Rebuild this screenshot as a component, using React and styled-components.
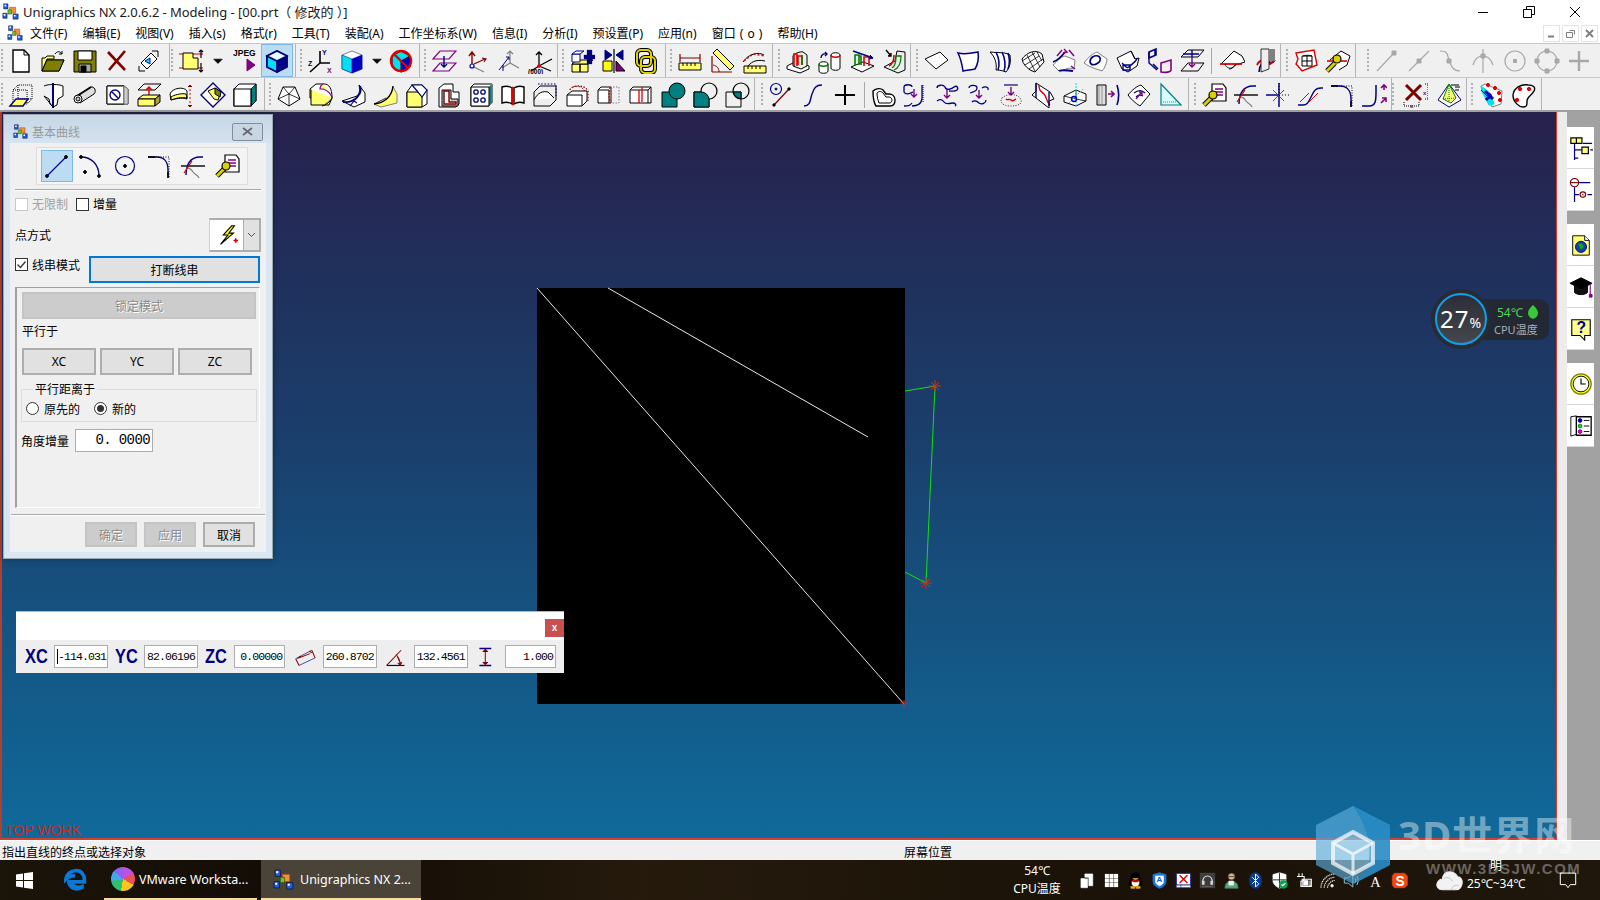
import React from "react";
import styled, { createGlobalStyle } from "styled-components";

const FONT = `"Noto Sans", "Noto Sans CJK SC", sans-serif`;

const GlobalStyle = createGlobalStyle`
  html, body { margin: 0; padding: 0; overflow: hidden; background: #fff; }
  * { box-sizing: border-box; }
  body { font-family: ${FONT}; font-size: 12px; color: #000; }
`;

const N = "#000080", K = "#000", M = "#800000", R = "#e00000", Y = "#ffff70", T = "#008080";
const P = "#800080", G = "#808080", W = "#fff", C = "#00e0f0", B = "#0000c0", L = "#a8a8a8";
const c = (x, y, r) => `M${x - r} ${y}a${r} ${r} 0 1 0 ${2 * r} 0a${r} ${r} 0 1 0 ${-2 * r} 0z`;
const dot = (x, y) => c(x, y, 1.4);

// every icon: list of [path, stroke, fill, strokeWidth] or {t: text}
const icons = {
  file: [["M5 2h11l5 5v17H5z", K, W, 1.4], ["M16 2v5h5", K, "none"]],
  open: [["M2 23V10h3l2-2h7v3H7L2 23h17l5-11H7", K, Y], ["M2 23l5-11h17l-5 11z", K, "#808000"], ["M15 6c2-3 5-3 7 0M22 3v3h-3", K, "none"]],
  save: [["M2 3h22v21H2z", K, "#808000"], ["M6 3h14v9H6z", K, W], ["M7 16h12v8H7z", K, L], ["M9 18h5v6H9z", K, K]],
  del: [["M4 4l17 18M21 3L5 22", M, "none", 2.6]],
  wcsview: [["M5 15l10-10 6 6-10 10z", K, W], ["M9 13l5-3v6z", B, C], ["M16 3h6v6M3 18v5h6", K, "none", 1]],
  crop: [["M1 6h24M1 20h24", R, "none"], ["M5 5h10v5h5v11H5z", K, Y], ["M23 2v8M23 15v9M21 4l2-2 2 2M21 22l2 2 2-2", K, "none", 1.2]],
  arrow: [["M6 10h14l-7 7z", K, K]],
  jpeg: [{ t: "JPEG", x: 1, y: 8, s: 8.5, c: K, w: 700 }, ["M15 11l8 6-8 6z", P, P]],
  cube: [["M3 8l10-5 10 5v11l-10 5-10-5z", N, W, 1.6], ["M3 8l10 5v11l-10-5z", N, C, 1.6], ["M13 13l10-5v11l-10 5z", N, N, 1.2], ["M3 8l10-5 10 5-10 5z", N, "#e8ffff", 1.6]],
  axes: [["M13 15V3M13 15l-10 9M13 15h10", K, "none", 1.6], { t: "Y", x: 15, y: 7, s: 7, c: N, w: 700 }, { t: "Z", x: 1, y: 18, s: 7, c: N, w: 700 }, { t: "X", x: 20, y: 25, s: 7, c: P, w: 700 }],
  cubeC: [["M3 7l10-4 10 4v14l-10 4-10-4z", N, W, 0.5], ["M3 7l10 4v14l-10-4z", N, C, 0.5], ["M13 11l10-4v14l-10 4z", B, B, 0.5]],
  noCube: [["M4 8l9-5 9 5v11l-9 5-9-5z", K, C], ["M13 13l9-5v11l-9 5z", K, B], [c(13, 13, 10), R, "none", 2.4], ["M6 6l14 14", R, "none", 2.4]],
  planes: [["M9 3h16l-7 8H2z", P, "none", 1.2], ["M9 15h16l-7 8H2z", P, "none", 1.2], ["M13 8v11M10 16l3 3 3-3", N, "none", 1.4]],
  ptvec: [["M9 17V4M6 8l3-4 3 4", M, "none", 1.4], ["M11 16l11-5M19 10l4 1-2 3", M, "none", 1.2], ["M11 19l10 5", G, "none", 1.2], [c(9, 18, 2), B, W, 1.2]],
  axes3g: [["M15 15V3M12 6l3-3 3 3M15 15l9 5M15 15l-8 5", G, "none", 1.2], ["M8 17v6M8 17l-4 5M8 17l6-8M11 9h3v3", N, "none", 1]],
  axes000: [["M12 18V4M9 7l3-3 3 3M12 18l13-7M12 18l12 5M12 18l-8 5", K, "none", 1.3], [c(12, 18, 1.4), R, R, 1], { t: "(000)", x: 1, y: 26, s: 6.5, c: K, w: 700 }],
  addBody: [["M3 16h8v8H3zM11 16h8v8h-8z", K, Y], ["M3 16l5-4h16l-5 4z", K, Y], ["M3 6h8v8H3z", N, W], ["M3 6l4-3h8l-4 3z", N, W], ["M18 2h5v5h3v4h-3v5h-5v-5h-3V7h3z", N, N, 0.3]],
  mirror: [["M13 1v24", K, "none", 1.2], ["M2 13h9v10H2z", K, "#ffff00"], ["M15 13l9 10h-9z", K, P], ["M4 2l7 5-7 5zM22 2l-7 5 7 5z", N, N]],
  chain: [["M8 2h6a4 4 0 0 1 4 4v8a4 4 0 0 1-4 4H8a4 4 0 0 1-4-4V6a4 4 0 0 1 4-4zM12 9h6a4 4 0 0 1 4 4v8a4 4 0 0 1-4 4h-6a4 4 0 0 1-4-4v-8a4 4 0 0 1 4-4z", K, "none", 4], ["M8 2h6a4 4 0 0 1 4 4v8a4 4 0 0 1-4 4H8a4 4 0 0 1-4-4V6a4 4 0 0 1 4-4zM12 9h6a4 4 0 0 1 4 4v8a4 4 0 0 1-4 4h-6a4 4 0 0 1-4-4v-8a4 4 0 0 1 4-4z", "#e0d000", "none", 2]],
  ruler: [["M3 6v8M23 6v8M3 10h20", M, "none", 1.2], ["M2 15h22v7H2z", K, Y], ["M6 15v3M10 15v3M14 15v3M18 15v3", K, "none", 1]],
  angle: [["M3 24V8M3 24h20", M, "none", 1.2], ["M4 5l4-4 17 17-4 4z", K, Y], ["M10 24c0-4-2-6-6-7", M, "none", 1]],
  surfMeas: [["M2 14c6-9 16-10 21-7M6 20c3-6 9-9 18-7", K, "none", 1], ["M3 13l9-7 12 2", R, "none", 1.4, "2 2"], ["M3 18h22v7H3z", K, Y], ["M7 18v3M11 18v3M15 18v3M19 18v3", K, "none", 1]],
  bossA: [["M2 18l8-4 14 4v3l-9 4-13-4z", K, W], ["M8 18V8c0-2 8-5 10-4l4 3v11l-6 3z", K, "#eee"], ["M9 18V6h3v12M13 17V8h4v9", R, "none", 1.6], ["M17 7v10", "#008000", "none", 1.6]],
  cylinders: [["M14 7c0-3 9-3 9 0v13c0 3-9 3-9 0z", K, W], ["M14 7c0 3 9 3 9 0", R, "none", 1.6], ["M2 16c0-3 9-3 9 0v7c0 3-9 3-9 0z", K, W], ["M2 16c0 3 9 3 9 0", "#008000", "none", 1.6], ["M4 10c0-4 4-5 6-4M8 4l2 2-2 2", N, "none", 1.4]],
  bossB: [["M2 19l12-5 11 4-12 6z", K, W], ["M6 18V7h4v10M10 8h2v9", "#008000", "none", 1.6], ["M15 18v-9h5v9", R, "none", 1.6], ["M4 3l20 7", N, "none", 1.4], ["M21 7l3 3-4 1", N, N]],
  bossC: [["M3 19l14 6 7-3V4l-8-1-2 10z", K, "#eee"], ["M11 20c4-2 4-8 4-12h5c0 6-2 12-7 14", "#008000", "none", 1.3], ["M8 18c4-2 5-7 5-11", R, "none", 1.6], ["M5 2l5 6M7 8h3V5", K, K, 1.4]],
  surfPts: [["M2 11l15-7 8 8-12 9z", K, W], ["M8 11h.1M12 9h.1M16 9h.1M10 14h.1M14 13h.1M18 12h.1M13 17h.1M16 16h.1", R, "none", 2.2]],
  surfPatch: [["M3 5c7 2 15 0 20-1 1 7 0 12-3 17-4 1-8 1-12 2-1-7-2-12-5-18z", N, W, 1.5]],
  surfRib: [["M3 4c9 1 15 0 20 3 1 7 0 12-4 17-5-2-8-2-10-2 1-7-1-13-6-18z", K, W, 1], ["M9 4c3 6 4 12 2 18M15 4c3 6 4 14 2 19M21 5c2 6 2 11 0 16", N, "none", 1.6]],
  surfMesh: [["M3 11c5-7 14-10 20-5l2 8-9 10-5-2c-4-3-7-6-8-11z", K, W], ["M8 7l8 16M13 4l8 15M18 4l5 9M3 13l13-8M6 17l14-9M10 21l14-10", K, "none", 0.8]],
  surfArrow: [["M2 17c4-3 7-8 12-9l10 4-1 9c-5-2-9 0-14 3z", G, W], ["M2 14c6-2 9-6 12-10", N, "none", 1.8], ["M8 23c0-1 8-1 14 0", N, "none", 1.8], ["M18 2l5 6M6 8l5-6M13 1l3 3-4 1M20 18l4 3", P, "none", 1.4]],
  surfLoop: [["M1 15C5 9 11 5 14 4l10 7c0 3-2 9-5 12-5-2-11-3-18-8z", G, W], ["M7 14c0-5 5-7 8-6s3 5 0 7-7 3-8-1z", N, "none", 1.6]],
  surfBlue: [["M2 10l14-7 4 8 4-1-2 8-9 6-6-3z", K, W], ["M16 3l4 8", K, "none"], ["M7 15c3 2 4 7 8 3s7-5 7-8M8 17h7v5H8z", N, "none", 1.4]],
  extr2: [["M2 10l7-3V1l-7 3zM8 8V2", N, "none", 1.6], ["M2 4v11l8 7", N, "none", 1.4], ["M14 15l10-3v10c0 2-6 3-10 2z", P, "none", 1.6], ["M6 16l5 5", N, N, 1.6]],
  stack: [["M9 2h16l-6 7H2z", K, "none", 1], ["M4 6h16M13 2v7", N, "none", 1.4], ["M9 15h16l-6 8H2z", K, "none", 1], ["M13 9v10M10 16l3 3 3-3", P, "none", 1.4]],
  trim1: [["M2 16l13-13 8 5 3 6-10 3c-2 3-4 4-6 4", K, W], ["M1 16h22", R, "none", 1.8], ["M6 16c1 5 8 6 11 0", K, "none", 0.8]],
  trim2: [["M8 24C8 18 12 12 17 12c2 4 5 3 7 0", N, "none", 1.6], ["M6 17c2-4 5-5 8-4 2 4 6 4 8 0", R, "none", 2], ["M10 1h8v20l-8 3z", K, "#eee", 0.8], ["M18 1h6v12h-6z", K, G, 0]],
  redSurf: [["M3 5l18-3 3 15-15 6-4-5-2-2 2-5z", R, W, 1.4], ["M9 8h10v10H9zM14 8v10M9 13h10", K, "none", 1], ["M10 8c3-1 6-1 9 0", K, "none", 1]],
  wrenchSurf: [["M5 12l11-9 9 5-3 9-8 5", K, W], ["M2 13l20 0", R, "none", 1.6], ["M2 23l8-8", K, "none", 5], ["M2 23l8-8", "#d8d000", "none", 3], [c(12, 11, 4), K, "#d8d000", 1.2]],
  dLine: [["M3 23L20 5", L, "none", 1.2], ["M18 3h4v4h-4z", L, L]],
  dLine2: [["M3 23L23 3", L, "none", 1.2], ["M11 11h4v4h-4z", L, L]],
  dCurve: [["M2 3c8 0 7 3 9 9s4 11 11 11", L, "none", 1.2], ["M9 11h4v4H9z", L, L]],
  dArcPt: [["M3 17c2-7 6-9 10-9s8 3 10 9M13 1v24", L, "none", 1.2], ["M11 6h4v4h-4z", L, L]],
  dCirc: [[c(13, 13, 10), L, "none", 1.2], ["M11.500 11.500h3v3h-3z", L, L]],
  dCirc2: [[c(13, 13, 10), L, "none", 1.2], ["M11 1h4v4h-4zM11 21h4v4h-4zM1 11h4v4H1zM21 11h4v4h-4z", L, L]],
  dPlus: [["M13 3v20M3 13h20", L, "none", 2.4]],
  boxPlane: [["M5 8l5-5h14v14l-5 5H5z", K, "none", 1, "1 1"], ["M5 8h14v14M10 3v14h14", K, "none", 1, "1 1"], ["M2 24l6-7h12l-5 7z", N, Y, 1.4]],
  pin: [["M4 4c4-2 15-2 19 0v10l-5 3-1 6-4 2V4", K, W], ["M13 25l-3-3-1-5-5-3z", K, "#eee"], ["M13 1v25", N, "none", 2]],
  tube: [["M5 14l14-9c3-1 6 4 3 7L8 21", K, "#ddd"], ["M5 14l14-9", K, W, 2], [c(6, 17, 4), K, W], [c(6, 17, 2), K, "#ccc"]],
  boxCircle: [["M3 4h17l4 3v15H3z", K, W], ["M3 4h17v18H3z", K, W], ["M20 4l4 3v15l-4 0z", G, "#ccc"], [c(11, 13, 5), N, "none", 1.4], ["M8 10l6 6", N, "none", 1.4]],
  extrude: [["M8 2h17l-6 6H2z", K, "none", 1], ["M13 14V5M10 8l3-3 3 3", R, "none", 1.4], ["M2 17l5-4h17l-5 4z", K, Y], ["M2 17h17v7H2z", K, Y], ["M19 17l5-4v7l-5 4z", K, "#b0a040"]],
  revolve: [["M2 12c2-6 14-8 17-3v8c-6-2-12 0-16 1z", K, W], ["M3 18c5-2 10-3 16-2l-1-4c-5-1-12 1-15 3z", K, Y], ["M22 3v22", R, "none", 1, "2 2"], ["M20 5l2-2 2 2M20 23l2 2 2-2", M, M, 1]],
  diamond: [["M13 1l12 12-12 12L1 13z", N, W, 1.4], ["M8 9l7-3 6 4-3 8-4-1z", K, Y], ["M15 6l6 4-1 5-5-3z", K, "#808000"]],
  cubeW: [["M2 7l5-5h17v17l-5 5H2z", K, W], ["M19 7l5-5v17l-5 5z", K, T, 0.8], ["M2 7h17v17H2z", K, W, 1.2]],
  frustum: [["M7 5h12l5 12-11 7-11-7z", K, W], ["M7 5l6 7 6-7M2 17l11-5 11 5M13 12v12", K, "none", 0.8]],
  blend: [["M2 7h10c6 0 11 3 12 9H2z", K, Y], ["M2 7l6-5h8c5 0 8 4 8 14", K, "#fff"], ["M16 2c-2 0-4 2-4 5h3c3 1 8 3 9 9", P, Y, 1.2], ["M3 8v15h18l3-7", K, Y], ["M14 24c4-1 8-4 10-8", K, "#b0a040"]],
  chamf1: [["M2 19l15-5c3-3 3-7 2-11l6 8v9L14 25z", K, W], ["M3 20c6 1 13-2 15-6 3-3 3-7 2-10", N, "none", 1.8], ["M10 24l4-5 3 2", N, "none", 1.2]],
  chamf2: [["M2 22c9-1 17-6 19-17l4 7v9L9 25z", G, Y], ["M2 22c10-1 18-7 19-18", K, "none", 1.4], ["M2 22l12-6", K, "none", 0.8]],
  chamfBlock: [["M3 10l5-7h10l5 5v14l-5 3H3z", K, W], ["M3 10h11l4 5v10H3z", K, Y], ["M14 10l4 5 5-7-5-5H8z", N, W, 1.2]],
  pocket: [["M3 6l5-4h9v8h6v12l-3 3H3z", K, W], ["M6 8h9v9h7v7H6z", K, "#ccc"], ["M8 9h5v11h7v2H8z", M, W, 1.4]],
  holes: [["M3 5l3-3h18v19l-3 3H3z", K, W], ["M21 5l3-3v19l-3 3z", G, T], ["M3 5h18v19H3z", K, W], [c(8, 10, 2.2), N, "none", 1.3], [c(15, 10, 2.2), N, "none", 1.3], [c(8, 18, 2.2), N, "none", 1.3], [c(15, 18, 2.2), N, "none", 1.3]],
  book: [["M2 5c3-1 7-1 10 1v16c-3-2-7-2-10-1zM14 6c3-2 7-2 10-1v16c-3-1-7-1-10 1z", K, W, 1.4], ["M12 5h2v18h-2z", R, R, 0.4]],
  shell: [["M2 10l6-6h16v14l-6 6H2z", K, "#eee"], ["M6 2h18v12", N, "none", 1, "1.600 1.600"], ["M2 18c4-8 9-9 14-8l6 6", K, W]],
  offset: [["M3 13l5-4h15v10l-5 5H3z", K, W], ["M3 13h15v11", K, "none"], ["M6 8c0-4 14-7 18 1v10", M, "none", 1.2, "1.500 1.500"], ["M9 5c5-2 10 0 12 5", M, "none", 1, "1.500 1.500"]],
  split: [["M2 8l3-3h10v16H2z", K, W], ["M2 8h11v13", K, "none"], ["M14 5h9v16h-9", G, "none", 1, "1.500 1.500"], ["M14 5l-1 8 1 8", R, "none", 1.4, "2 1"]],
  split2: [["M2 8l3-3h18v16H2z", K, W], ["M2 8h18v13M20 8l3-3", K, "none"], ["M11 8V21M14 5v15", R, "none", 1.3]],
  uniteT: [["M2 10h15v15H2z", K, T], [c(17, 9, 8), K, T]],
  subtT: [["M2 10h15v15H2z", K, T], [c(17, 9, 8), K, "#f0f0f0", 1.2], ["M2 10h7.500a8 8 0 0 1 7.500 7v8H2z", K, T, 1]],
  intersT: [["M2 10h15v15H2z", K, "#f0f0f0"], [c(17, 9, 8), K, "none", 1.2], ["M9.500 10H17v6.500a8 8 0 0 1-7.500-6.500z", K, T, 1]],
  circLine: [[c(8, 7, 5.5), N, "none", 1.2], [c(8, 7, 1), N, N], ["M6 23L21 7", M, "none", 1.2], [c(6, 23, 1.2), K, K], [c(21, 7, 1.2), K, K]],
  spline: [["M4 24c7 0 6-7 8-12s3-9 10-9", N, "none", 1.4]],
  plus: [["M13 3v20M3 13h20", K, "none", 2]],
  profile: [["M3 9c3-3 8-3 10-1l3 4h3c3 0 6 2 6 6s-2 6-5 6H6c-2-3-3-8-3-15z", K, W, 1.4], ["M7 11c2-2 4-2 6 0l3 4h3c2 0 3 2 3 3s-1 3-2 3H9c-1-3-2-6-2-10z", K, "none", 1]],
  curves1: [["M2 5c0-3 8-3 8 0M10 24c5 0 9-2 10-7V3", N, "none", 1.3], ["M2 5v5c2 3 4 2 9 0M2 24c4 0 6 0 8-3", N, "none", 1.3], ["M21 3v18", K, "none", 1, "1 1"], ["M12 7v8M9 12l3 3 3-3", P, "none", 1.4]],
  curves2: [["M3 6c0-3 6-4 8-1 1 4 7 2 9 0 3-2 5 1 3 3s-6 1-8 1M3 19c2-2 5-2 7 1 2 3 7 1 9 1s4 2 2 3", N, "none", 1.3], ["M13 8v8M10 13l3 3 3-3", P, "none", 1.4]],
  curves3: [["M3 6c0-3 8-4 8 0s-5 4-7 5M6 20c2-2 5-1 7 1 3 2 7 0 7-3M16 6c3-2 7-1 6 2", N, "none", 1.3], ["M13 8v8M10 13l3 3 3-3", P, "none", 1.4]],
  offPts: [["M6 3h14", N, "none", 1.2], ["M13 5v8M10 10l3 3 3-3", P, "none", 1.4], ["M4 16c4-4 14-5 18 0 4 6-2 8-10 8-7 0-11-4-8-8z", K, "none", 0.8, "1 1.500"], ["M8 17c2 2 3-1 5 1s3 0 5-1", R, "none", 1.4]],
  prism: [["M6 1l14 9 4 7-5 2v7L6 16 2 13 6 9z", K, W, 1], ["M9 3c0 6 2 6 5 9s2 8 6 11", R, "none", 1.4], ["M6 1v15M19 10v14", N, "none", 1.4]],
  wire: [["M2 14l12-6 10 4v7l-10 5-12-4z", K, W], ["M14 8v9l10 2M14 17L2 14", K, "none", 0.8], ["M14 1v24M7 21l14-14", C, "none", 1, "2 1"], [c(12, 17, 2.5), B, "none", 1.4]],
  swoopArr: [["M3 3h9v20H3z", K, "#e0e0e0"], ["M5 3v20M8 3v20", G, "none", 0.8], ["M14 12h6M17 9l3 3-3 3", P, "none", 1.6], ["M23 3c2 6 2 14 0 20", N, "none", 1.6]],
  radial: [["M2 13c4-5 9-9 13-10l9 9-10 12C9 21 5 17 2 13z", K, W], ["M8 11c4-3 8-3 11 0M10 15c2-2 5-2 7-1", N, "none", 1.3], ["M10 17l5-6M13 10h3v3", P, "none", 1.4]],
  triangle: [["M3 2l20 21H3z", T, "#d8ffff", 1.2], ["M5 20h14", C, "none", 1.4, "1 1"]],
  wrenchDoc: [["M11 2h11l3 4v13H11z", K, W, 1.2], ["M14 7h8M14 10h8M14 13h8", P, "none", 1.6], ["M3 23l9-9", K, "none", 5], ["M3 23l9-9", "#d8d000", "none", 3], [c(12, 13, 4), K, "#d8d000", 1.2]],
  trimX: [["M1 13h24", K, "none", 1.4], ["M6 22c0-10 4-18 14-18h3", N, "none", 1.4], ["M6 15c4 0 5 1 7 4s5 3 6 6", G, "none", 1.2], ["M4 20L12 8", R, "none", 1.2]],
  cross: [["M1 13h14", N, "none", 1.5], ["M14 13v12M14 1v12", N, "none", 1.5], ["M14 13h12M14 1v11", K, "none", 1, "1 2"], ["M8 8l11 11M19 8L8 19", R, "none", 0.9]],
  corner: [["M1 23h5c4 0 5-2 8-8s4-9 10-9h2", N, "none", 1.4], ["M3 20l9-9M12 20l9-9", R, "none", 1]],
  fillet: [["M2 4h9c7 0 11 5 11 13v8", N, "none", 1.4], ["M2 4h21v21", K, "none", 1, "1 1.500"], ["M2 4h7", K, "none", 1.4], ["M22 19v6", K, "none", 1.4]],
  stretch: [["M1 24h7c7 0 7-6 7-14V3", N, "none", 1.5], ["M23 8v-5M20 6l3-3 3 3M20 21l5-5M21 16h4v4", P, "none", 1.6]],
  xdim: [["M4 3l15 15M19 3L4 18", M, "none", 3], ["M23 2h3v15h-3M2 20v4h15v-4", K, "none", 1, "1 1"], { t: "x", x: 21, y: 13, s: 6, c: P, w: 700 }, { t: "x", x: 8, y: 26, s: 6, c: P, w: 700 }],
  pyramid: [["M13 2L2 18l11 7 12-7z", N, W, 1], ["M13 2L7 17l8 4 5-5z", "#008000", Y, 1], ["M13 2v18M7 17l13-1", "#008000", "none", 1, "1 1"], ["M15 3h8M19 5h5M19 8h4", K, "none", 1]],
  surfCy: [["M3 4l4-2 17 7-1 13-9 3z", G, W], ["M3 4l9 7 4 11-5 1-7-13z", C, C], ["M3 8l9 9", K, "none", 0.8], ["M7 9l8 8M8 18l5-6", B, "none", 3], [c(10, 3, 1.6), R, R], [c(17, 6, 1.6), R, R], [c(21, 11, 1.6), R, R], [c(22, 18, 1.6), R, R]],
  loopDots: [["M3 13C4 5 12 2 18 3c5 0 8 2 6 6s-7 6-7 10 0 6-4 6-10-5-10-12z", K, W, 1.4], [c(10, 7, 1.7), R, R], [c(19, 7, 1.7), R, R], [c(7, 18, 1.7), R, R]],
  dlgLine: [["M3 23L22 4", N, "none", 1.1], [dot(3, 23), K, K], [dot(22, 4), K, K]],
  dlgArc: [["M3 4c10 0 18 7 18 19", N, "none", 1.3], [dot(3, 4), K, K], [dot(21, 23), K, K], [dot(7, 19), K, K]],
  dlgCirc: [[c(13, 13, 9.500), N, "none", 1.2], [dot(13, 13), K, K]],
  bolt: [["M18 3L9 13h5L6 23l14-12h-5l6-8z", K, "#ffff00", 1.2], ["M20 19h5M22.500 16.500v5", R, "none", 1.8]],
  scale: [["M4 3h14M4 23h14", N, "none", 1.6], ["M11 4v18M8 7l3-3 3 3M8 19l3 3 3-3", M, M, 1.2]],
  rect: [["M2 15L21 5M6 23l19-9", N, "none", 0.8], ["M2 15l4 8M21 5l4 9", M, "none", 1.2], ["M6 14l13-5M4 15l4-3M21 8l-3-2", M, M, 1.2]],
  arcAngle: [["M2 23L19 5", M, "none", 1.2], ["M2 23h21", N, "none", 1.4], ["M13 10c3 3 5 7 5 12M15 20l3 3 2-4", M, M, 1]],
  tree1: [["M2 2h6v6H2zM8 2h6v6H8zM14 12h7v7h-7z", K, Y, 1.3], ["M6 8v18M6 15h8M6 24h4M15 8h10M23 15h3", N, "none", 1.3]],
  tree2: [[c(6, 5, 4.500), M, W, 1.2], ["M2 5h8", M, "none", 1.2], ["M6 10v16M6 18h5M11 5h12M20 18h5", N, "none", 1.3], [c(15, 18, 3), M, W, 1.2], ["M14 17l2 2M16 17l-2 2", M, "none", 0.8]],
  globeDoc: [["M4 3h13l5 5v16H4z", K, Y, 1], ["M17 3v5h5", K, W], [c(13, 15, 6), N, "#1040c0"], ["M10 12c3-2 5 0 6 3-1 3-3 3-4 2z", "#008000", "#20a020", 0.6]],
  gradCap: [["M1 9l12-6 12 6-12 6z", K, K], ["M6 12v7c3 3 11 3 14 0v-7l-7 3z", K, "#101010"], ["M23 10v11", P, "none", 1.2], ["M22 21h3v3h-3z", P, P]],
  help: [["M3 3h20v17h-6v5l-5-5H3z", K, "#ffff90", 1.2], { t: "?", x: 8, y: 17, s: 17, c: N, w: 700 }],
  clock: [[c(13, 13, 11), "#808000", "#ffff20", 1.4], [c(13, 13, 8.500), K, W, 1], ["M13 7v6h5", K, "none", 1.2]],
  doorList: [["M2 3l6-1v20l-6 2z", K, W], ["M8 3h16v20H8z", K, W, 1.4], ["M16 7h6M16 13h6M16 19h6", K, "none", 1], [c(12, 7, 2), N, B], [c(12, 13, 2), "#008000", "#20d020"], [c(12, 19, 2), P, "#e000e0"]],
  sync: [["M3 10h10v14H3z", W, W, 1], ["M9 3h12v18h-6V8H9z", W, W, 1], ["M9 10h4", "#333", "none", 1]],
  grid: [["M3 3h6v6H3zM10 3h6v6h-6zM17 3h6v6h-6zM3 10h6v6H3zM10 10h6v6h-6zM17 10h6v6h-6zM3 17h6v6H3zM10 17h6v6h-6zM17 17h6v6h-6z", W, W, 0.3]],
  qq: [["M13 1c-5 0-7 4-7 8 0 3-3 6-3 10 0 2 2 1 3 0 1 4 3 5 7 5s6-1 7-5c1 1 3 2 3 0 0-4-3-7-3-10 0-4-2-8-7-8z", K, K], ["M8 14c3 2 7 2 10 0 1 4 0 8-5 8s-6-4-5-8z", W, W], ["M8 12c3 2 7 2 10 0l-1 3H9z", R, R], ["M9 10l4 2 4-2z", "#f0b000", "#f0b000"], ["M6 22h6v3H6zM14 22h6v3h-6z", "#f0b000", "#f0b000"]],
  shieldA: [["M13 1l10 3v10c0 6-5 9-10 11C8 23 3 20 3 14V4z", "#1878d8", "#1878d8"], ["M7 6h12v9c0 3-3 5-6 6-3-1-6-3-6-6z", W, W], { t: "A", x: 8.500, y: 16, s: 12, c: "#1060d0", w: 700 }],
  redX: [["M2 2h22v18H2z", "#102090", W, 1.5], ["M7 5l12 12M19 5L7 17", R, "none", 2.2], ["M2 20h22v4H2z", "#102090", W, 1], ["M9 20v4", "#102090", "none"]],
  headset: [["M2 2h22v22H2z", "#555", "#3c3c3c"], ["M6 16c-2-13 16-13 14 0", "#ddd", "none", 1.6], ["M5 14h3v5H5zM18 14h3v5h-3z", "#ddd", "#ddd"], ["M5 22h16", "#aaa", "none", 1, "1 1"]],
  person: [[c(13, 7, 5), "#5a4a30", "#c8c0a8"], ["M3 25c0-8 4-11 10-11s10 3 10 11z", "#408060", "#58a080"], ["M9 7h8", "#703020", "none", 1.4], ["M9 14h7v6H9z", W, "#eee"]],
  bt: [["M13 1c6 0 9 5 9 12s-3 12-9 12-9-5-9-12 3-12 9-12z", "#0b3c8c", "#0b3c8c"], ["M8 8l10 10-5 5V3l5 5-10 10", W, "none", 1.5]],
  defender: [["M13 1l10 3v9c0 6-5 9-10 12C8 22 3 19 3 13V4z", W, W], ["M13 1v24M3 12h20", "#222", "none", 1.4], [c(19, 19, 6), "#10a050", "#10a050"], ["M16 19l2 2 4-4", W, "none", 1.6]],
  plug: [["M6 2v5M11 2v5M3 7h11v4c0 2-3 3-5 3v8h14v-9", W, "none", 1.6], ["M11 11h14v11H11z", W, "none", 1.6], ["M13 13h7v7h-7z", W, W]],
  wifi: [["M3 24c0-11 10-21 21-21M8 24c0-8 8-16 16-16M13 24c0-5 6-11 11-11", "#e8e8e8", "none", 1.8, "2 1"], [c(20, 21, 2), W, W]],
  volume: [["M2 9h6l7-6v20l-7-6H2z", "#8ad0f0", "none", 1.4], ["M18 9c2 2 2 6 0 8M21 6c3 4 3 10 0 14", "#8ad0f0", "none", 1.5]],
  fontA: [{ t: "A", x: 5, y: 23, s: 22, c: W, w: 400, f: "Liberation Serif" }],
  sogou: [["M5 2h16l4 4v14l-4 4H5l-3-4V6z", "#f04810", "#f04810"], { t: "S", x: 7, y: 21, s: 21, c: W, w: 700, f: "Liberation Sans" }],
  cloud: [["M7 22c-4 0-6-3-5-6s3-4 5-4c0-5 5-8 9-6 2 0 4 2 5 4 3 0 5 3 4 7s-3 5-5 5z", "#eee", "#f2f2f2"], ["M8 12c2-2 6-2 8 2M15 22c1-3 4-5 7-4", "#bbb", "none", 0.8]],
  notify: [["M3 4h20v15h-7l-3 4-3-4H3z", W, "none", 1.3]],
  edge: [["M4 15h18c1-8-4-13-10-12C7 3 3 7 2 12c3-3 7-4 10-3", "#0a78d4", "none", 4], ["M4 13c-1 7 4 11 10 11 3 0 5-1 7-2v-4c-6 3-10 1-11-3", "#0a78d4", "#0a78d4", 1]],
};

const Icon = ({ name, size = 26 }) => (
  <svg width={size} height={size} viewBox="0 0 26 26" style={{ display: "block", flex: "none" }}>
    {icons[name].map((s, i) =>
      Array.isArray(s) ? (
        <path key={i} d={s[0]} stroke={s[1]} fill={s[2]} strokeWidth={s[3] ?? 1} strokeDasharray={s[4]} />
      ) : (
        <text key={i} x={s.x} y={s.y} fontSize={s.s} fill={s.c} fontWeight={s.w} fontFamily={s.f || "Liberation Sans"}>
          {s.t}
        </text>
      )
    )}
  </svg>
);

const AppLogo = ({ size = 16 }) => (
  <svg width={size} height={size} viewBox="0 0 20 20" style={{ flex: "none", display: "block" }}>
    <path d="M2 1h5v6H2z" fill="#1f5fe0" stroke="#003" strokeWidth=".6" />
    <path d="M3 2h2v2H3z" fill="#fff" />
    <path d="M9 5h7v7H9z" fill="#f09040" stroke="#a04000" strokeWidth=".6" />
    <path d="M7 8h4v5H7z" fill="#70c030" stroke="#205000" strokeWidth=".6" />
    <path d="M1 12h5v6H1z" fill="#1f5fe0" stroke="#003" strokeWidth=".6" />
    <path d="M13 13h6v6h-6z" fill="#1f5fe0" stroke="#003" strokeWidth=".6" />
    <path d="M2 13h2v2H2zM14 14h2v2h-2z" fill="#fff" />
  </svg>
);

/* ---- window chrome ---- */
const Screen = styled.div`
  width: 1600px;
  height: 900px;
  display: flex;
  flex-direction: column;
  position: relative;
  overflow: hidden;
`;
const TitleBar = styled.div`
  height: 23px;
  display: flex;
  align-items: center;
  padding-left: 2px;
  background: #fff;
  font-size: 13px;
  color: #1a1a1a;
  gap: 4px;
`;
const TitleText = styled.span`
  flex: 1;
  white-space: pre;
  letter-spacing: -0.06px;
`;
const WinControls = styled.div`
  display: flex;
  align-items: center;
  height: 23px;
  margin-right: 2px;
`;
const WinControl = styled.div`
  width: 46px;
  display: flex;
  justify-content: center;
`;
const MenuBar = styled.div`
  height: 20px;
  display: flex;
  align-items: center;
  background: #fff;
  padding-left: 7px;
`;
const MenuItems = styled.div`
  display: flex;
  margin-left: 7px;
  gap: 15px;
  flex: 1;
  font-size: 12px;
  white-space: pre;
`;
const MenuItem = styled.span`
  margin-right: ${(p) => p.$mr || 0}px;
  word-spacing: ${(p) => p.$ws || 0}px;
`;
const MdiButtons = styled.div`
  display: flex;
  gap: 2px;
  margin-right: 2px;
`;
const MdiButton = styled.div`
  width: 17px;
  height: 17px;
  border: 1px solid #e4e4e4;
  background: #fff;
  display: flex;
  align-items: center;
  justify-content: center;
`;

/* ---- toolbars ---- */
const ToolRow = styled.div`
  height: ${(p) => (p.$last ? 35 : 34)}px;
  flex: none;
  display: flex;
  background: #f0f0f0;
  border-top: 1px solid #c8c8c8;
  border-bottom: ${(p) => (p.$last ? "2px solid #a0a0a0" : "0")};
  overflow: hidden;
`;
const Group = styled.div`
  display: flex;
  align-items: center;
  padding-left: ${(p) => (p.$pl ?? 5) - 4}px;
  padding-right: ${(p) => p.$pr ?? 4}px;
  margin-left: ${(p) => p.$ml || 0}px;
  border-right: ${(p) => (p.$open ? "0" : "1px solid #b4b4b4")};
  height: 33px;
`;
const Grip = styled.div`
  width: 2px;
  height: 24px;
  margin-right: 2px;
  background: repeating-linear-gradient(#b0b0b0 0 2px, transparent 2px 4px);
`;
const ToolBtn = styled.div`
  width: ${(p) => p.$w || 32}px;
  height: 33px;
  flex: none;
  display: flex;
  align-items: center;
  justify-content: center;
  background: ${(p) => (p.$on ? "#bcdcf4" : "transparent")};
  box-shadow: ${(p) => (p.$on ? "inset 0 0 0 1px #7cb8e8" : "none")};
`;
const InnerSep = styled.div`
  width: 1px;
  height: 26px;
  background: #a8a8a8;
  margin: 0 ${(p) => p.$r ?? 4}px 0 3px;
  flex: none;
`;

const ToolGroup = ({ items, ...rest }) => (
  <Group {...rest}>
    <Grip />
    {items.map((it, i) => {
      if (it === "|") return <InnerSep key={i} />;
      if (it === "||") return <InnerSep key={i} $r={2} />;
      const [name, w, on] = Array.isArray(it) ? it : [it];
      return (
        <ToolBtn key={i} $w={w} $on={on}>
          <Icon name={name} size={name === "arrow" ? 16 : 26} />
        </ToolBtn>
      );
    })}
  </Group>
);

/* ---- work area ---- */
const Workspace = styled.div`
  flex: 1;
  display: flex;
  min-height: 0;
`;
const Canvas = styled.div`
  flex: 1;
  position: relative;
  background: linear-gradient(#27214c 0%, #1a3f6c 45%, #0f6a9a 100%);
  border-left: 2px solid #b04030;
  border-right: 1px solid #d04030;
  border-bottom: 2px solid #d04030;
`;
const ModelView = styled.svg`
  position: absolute;
  left: -2px;
  top: 0;
`;
const CornerLabel = styled.div`
  position: absolute;
  left: 3px;
  bottom: 0;
  font: 14px "Liberation Sans", sans-serif;
  color: #c82a1e;
`;
const SideStrip = styled.div`
  width: 10px;
  background: #ececec;
`;
const SidePanel = styled.div`
  width: 33px;
  background: #a2a2a2;
  padding-top: 15px;
`;
const SideTabs = styled.div`
  width: 27px;
  margin-bottom: 13px;
`;
const SideTab = styled.div`
  height: 42px;
  background: #fff;
  border-bottom: 1px solid #d8d8d8;
  display: flex;
  align-items: center;
  justify-content: center;
`;

/* ---- dialog ---- */
const Dialog = styled.div`
  position: absolute;
  left: 1px;
  top: 2px;
  width: 270px;
  height: 445px;
  background: #d9e6f2;
  border: 1px solid #9aa8b4;
  padding: 0 6px 6px;
  display: flex;
  flex-direction: column;
  box-shadow: 0 0 6px rgba(0, 0, 0, 0.35);
`;
const DialogTitle = styled.div`
  height: 28px;
  display: flex;
  align-items: center;
  gap: 4px;
  margin: 0 -6px;
  padding: 5px 9px 0;
  background: linear-gradient(#c6d6e4, #d6e4f0);
  color: #9a9a9a;
  font-size: 12px;
`;
const DialogClose = styled.div`
  margin-left: auto;
  width: 31px;
  height: 18px;
  border: 1px solid #7e8e9c;
  border-radius: 2px;
  background: #c8d6e2;
  display: flex;
  align-items: center;
  justify-content: center;
`;
const Client = styled.div`
  flex: 1;
  background: #f0f0f0;
  padding: 4px 5px 0;
  display: flex;
  flex-direction: column;
`;
const IconStrip = styled.div`
  margin-left: 21px;
  width: 212px;
  height: 38px;
  padding: 2px 4px;
  display: flex;
  gap: 2px;
  background: #f4f4f4;
  border: 1px solid #dcdcdc;
`;
const StripBtn = styled.div`
  width: 32px;
  height: 32px;
  display: flex;
  align-items: center;
  justify-content: center;
  background: ${(p) => (p.$on ? "#bcdcf4" : "transparent")};
  box-shadow: ${(p) => (p.$on ? "inset 0 0 0 1px #7cb8e8" : "none")};
`;
const Separator = styled.div`
  height: 2px;
  margin: ${(p) => p.$m};
  background: #a8a8a8;
  border-bottom: 1px solid #fff;
`;
const DlgRow = styled.div`
  display: flex;
  align-items: center;
  height: ${(p) => p.$h}px;
  margin-top: ${(p) => p.$mt || 0}px;
`;
const CheckBox = styled.div`
  width: 13px;
  height: 13px;
  flex: none;
  background: #fff;
  border: 1px solid ${(p) => (p.$off ? "#c8c8c8" : "#333")};
  margin-right: 4px;
  margin-bottom: ${(p) => (p.$up ? 10 : 0)}px;
  display: flex;
  align-items: center;
  justify-content: center;
`;
const DlgLabel = styled.span`
  color: ${(p) => (p.$off ? "#a0a0a0" : "#000")};
  margin-right: ${(p) => p.$mr || 0}px;
  margin-bottom: ${(p) => (p.$up ? 10 : 0)}px;
  white-space: nowrap;
`;
const PointButton = styled.div`
  margin-left: auto;
  display: flex;
  height: 34px;
  border: 2px solid #adadad;
  border-left: 1px solid #d0d0d0;
`;
const PointFace = styled.div`
  width: 33px;
  background: #fff;
  display: flex;
  align-items: center;
  justify-content: center;
`;
const PointDrop = styled.div`
  width: 16px;
  background: #e1e1e1;
  border-left: 1px solid #adadad;
  display: flex;
  align-items: center;
  justify-content: center;
`;
const Btn = styled.div`
  width: ${(p) => p.$w}px;
  height: ${(p) => p.$h}px;
  flex: none;
  display: flex;
  align-items: center;
  justify-content: center;
  margin-left: ${(p) => p.$ml || 0}px;
  font-size: 12px;
  background: ${(p) => (p.$off ? "#cccccc" : "#e1e1e1")};
  color: ${(p) => (p.$off ? "#8a8a8a" : "#000")};
  text-shadow: ${(p) => (p.$off ? "1px 1px 0 #fff" : "none")};
  border: 2px solid ${(p) => (p.$focus ? "#0078d7" : p.$off ? "#c4c4c4" : "#adadad")};
`;
const Pane = styled.div`
  margin-top: 4px;
  width: 245px;
  height: 221px;
  padding: 4px 3px 0 5px;
  border-top: 1px solid #a0a0a0;
  border-left: 2px solid #a0a0a0;
  border-right: 1px solid #fff;
  border-bottom: 1px solid #fff;
  display: flex;
  flex-direction: column;
`;
const AxisRow = styled.div`
  display: flex;
  gap: 4px;
  margin-top: 9px;
`;
const Fieldset = styled.div`
  position: relative;
  margin-top: 14px;
  margin-left: -1px;
  width: 236px;
  height: 33px;
  border: 1px solid #dcdcdc;
  display: flex;
  align-items: center;
  padding: 6px 0 0 4px;
`;
const Legend = styled.span`
  position: absolute;
  left: 11px;
  top: -8px;
  padding: 0 2px;
  background: #f0f0f0;
  line-height: 16px;
`;
const Radio = styled.div`
  width: 13px;
  height: 13px;
  flex: none;
  border-radius: 50%;
  background: #fff;
  border: 1px solid #333;
  margin-right: 5px;
  display: flex;
  align-items: center;
  justify-content: center;
  &::after {
    content: "";
    width: 7px;
    height: 7px;
    border-radius: 50%;
    background: ${(p) => (p.$on ? "#333" : "transparent")};
  }
`;
const AngleRow = styled(DlgRow)`
  margin-left: -1px;
`;
const AngleInput = styled.div`
  width: 78px;
  height: 23px;
  margin-left: 6px;
  background: #fff;
  border: 1px solid #adadad;
  text-align: right;
  padding-right: 2px;
  font: 14px/21px "Liberation Mono", monospace;
  letter-spacing: -0.6px;
`;
const DialogFoot = styled.div`
  display: flex;
  margin-top: 6px;
  padding-left: 70px;
  gap: 7px;
`;

/* ---- coordinate bar ---- */
const DataBar = styled.div`
  position: absolute;
  left: 14px;
  top: 499px;
  width: 548px;
  height: 62px;
  background: #fff;
  border-top: 1px solid #c8b878;
  display: flex;
  flex-direction: column;
`;
const DataTop = styled.div`
  height: 28px;
  display: flex;
  justify-content: flex-end;
  align-items: flex-start;
  padding-top: 7px;
`;
const DataClose = styled.div`
  width: 19px;
  height: 18px;
  background: #c75050;
  color: #fff;
  font: 700 10px/17px "Liberation Sans", sans-serif;
  text-align: center;
`;
const DataRow = styled.div`
  flex: 1;
  background: #eeeeee;
  display: flex;
  align-items: center;
  padding-left: 9px;
`;
const AxisLabel = styled.div`
  width: 22px;
  font: 700 20px "Liberation Sans", sans-serif;
  color: ${N};
  transform: scaleX(0.82);
  transform-origin: left center;
  white-space: nowrap;
`;
const DataInput = styled.div`
  position: relative;
  width: ${(p) => p.$w || 54}px;
  height: 23px;
  margin: 0 ${(p) => p.$mr || 8}px 0 7px;
  background: #fff;
  border: 1px solid #adadad;
  text-align: ${(p) => (p.$caret ? "left" : "right")};
  padding: 0 2px 0 ${(p) => (p.$caret ? 3 : 2)}px;
  font: 11.5px/21px "Liberation Mono", monospace;
  letter-spacing: -0.9px;
  white-space: nowrap;
  &::before {
    content: "";
    display: ${(p) => (p.$caret ? "block" : "none")};
    position: absolute;
    left: 2px;
    top: 3px;
    width: 1px;
    height: 15px;
    background: #000;
  }
`;
const DataIcon = styled.div`
  width: ${(p) => p.$w || 22}px;
  display: flex;
  justify-content: center;
`;

/* ---- cpu widget ---- */
const CpuWidget = styled.div`
  position: absolute;
  left: 1429px;
  top: 177px;
  display: flex;
  align-items: center;
`;
const CpuDial = styled.div`
  width: 60px;
  height: 60px;
  border-radius: 50%;
  background: #272b35;
  display: flex;
  align-items: center;
  justify-content: center;
  position: relative;
  z-index: 1;
`;
const CpuRing = styled.div`
  width: 52px;
  height: 52px;
  border-radius: 50%;
  border: 2px solid #10a0e8;
  background: linear-gradient(#2b2e38, #45474e);
  color: #fff;
  display: flex;
  align-items: baseline;
  justify-content: center;
  font: 24px/48px "Noto Sans", sans-serif;
  letter-spacing: 1px;
  & small {
    font-size: 14px;
  }
`;
const CpuPill = styled.div`
  width: 70px;
  height: 41px;
  margin-left: -12px;
  padding: 3px 0 0 15px;
  border-radius: 0 10px 10px 0;
  background: #242832;
  font-size: 11px;
  color: #a8b0b8;
  display: flex;
  flex-direction: column;
  justify-content: center;
  line-height: 17px;
`;
const CpuTemp = styled.div`
  color: #56d45a;
  font-size: 12px;
  display: flex;
  align-items: center;
  gap: 5px;
  padding-left: 3px;
`;

/* ---- status + taskbar ---- */
const StatusBar = styled.div`
  height: 20px;
  flex: none;
  display: flex;
  align-items: center;
  background: #f0f0f0;
  border-top: 1px solid #fff;
  padding: 2px 0 0 2px;
  font-size: 12px;
`;
const StatusLeft = styled.div`
  width: 902px;
`;
const Taskbar = styled.div`
  height: 40px;
  flex: none;
  display: flex;
  align-items: center;
  background: linear-gradient(90deg, #1b1409, #120c05 20%, #251a0c 40%, #1a1208 70%, #1f170c);
  color: #fff;
`;
const StartBtn = styled.div`
  width: 48px;
  display: flex;
  justify-content: center;
`;
const EdgeBtn = styled.div`
  width: 56px;
  display: flex;
  justify-content: center;
`;
const TaskBtn = styled.div`
  width: ${(p) => p.$w}px;
  height: 40px;
  margin-right: 4px;
  display: flex;
  align-items: center;
  gap: ${(p) => p.$gap}px;
  padding-left: ${(p) => p.$pad}px;
  background: ${(p) => (p.$active ? "#4a4438" : "transparent")};
  border-bottom: 2px solid #f8dc98;
  font-size: 12.5px;
  white-space: nowrap;
`;
const VmIcon = styled.div`
  width: 24px;
  height: 24px;
  border-radius: 50%;
  background: conic-gradient(#c050e0 0 60deg, #f05050 60deg 120deg, #f8c820 120deg 190deg, #30c070 190deg 260deg, #40a8f0 260deg 310deg, #9060f0 310deg);
`;
const Spacer = styled.div`
  flex: 1;
`;
const TrayText = styled.div`
  width: 60px;
  text-align: center;
  font-size: 12px;
  line-height: 18px;
  margin-right: 8px;
`;
const TrayIcon = styled.div`
  width: 24px;
  display: flex;
  justify-content: center;
`;
const Weather = styled.div`
  width: 139px;
  display: flex;
  align-items: center;
  padding-left: 24px;
`;
const WeatherText = styled.div`
  margin: 0 0 10px 4px;
  text-align: center;
  font-size: 12px;
  line-height: 18px;
`;
const NotifyBtn = styled.div`
  width: 36px;
  margin-right: 14px;
  display: flex;
  justify-content: center;
`;

/* ---- watermark ---- */
const Watermark = styled.div`
  position: absolute;
  left: 1316px;
  top: 806px;
  display: flex;
  gap: 8px;
  pointer-events: none;
`;
const WmText = styled.div`
  display: flex;
  flex-direction: column;
  padding-top: 8px;
`;
const WmBig = styled.div`
  font: 700 40px/42px "Noto Sans", "Noto Sans CJK SC", sans-serif;
  color: rgba(255, 255, 255, 0.42);
  letter-spacing: 1px;
  white-space: nowrap;
`;
const WmSmall = styled.div`
  font: 700 15px/18px "Liberation Sans", sans-serif;
  color: rgba(255, 255, 255, 0.34);
  letter-spacing: 1.5px;
  margin: 4px 0 0 28px;
  white-space: nowrap;
`;

const menu = ["文件(F)", "编辑(E)", "视图(V)", "插入(s)", "格式(r)", "工具(T)", "装配(A)", "工作坐标系(W)", "信息(I)", "分析(I)", "预设置(P)", "应用(n)"];
const tray = ["sync", "grid", "qq", "shieldA", "redX", "headset", "person", "bt", "defender", "plug", "wifi", "volume", "fontA", "sogou"];
const star = (x, y) => `M${x - 6} ${y}h12M${x} ${y - 6}v12M${x - 4} ${y - 4}l8 8M${x + 4} ${y - 4}l-8 8`;

export default function App() {
  return (
    <Screen>
      <GlobalStyle />
      <TitleBar>
        <AppLogo size={17} />
        <TitleText>Unigraphics NX 2.0.6.2 - Modeling - [00.prt（ 修改的 ）]</TitleText>
        <WinControls>
          <WinControl>
            <svg width="12" height="12"><path d="M1 6.500h10" stroke="#000" /></svg>
          </WinControl>
          <WinControl>
            <svg width="12" height="12"><path d="M.5 3.500h8v8h-8zM3.500 3.500v-3h8v8h-3" stroke="#000" fill="none" /></svg>
          </WinControl>
          <WinControl>
            <svg width="12" height="12"><path d="M1 1l10 10M11 1L1 11" stroke="#000" /></svg>
          </WinControl>
        </WinControls>
      </TitleBar>
      <MenuBar>
        <AppLogo size={16} />
        <MenuItems>
          {menu.map((m) => (
            <MenuItem key={m}>{m}</MenuItem>
          ))}
          <MenuItem $ws={1}>窗口 ( o )</MenuItem>
          <MenuItem>帮助(H)</MenuItem>
        </MenuItems>
        <MdiButtons>
          <MdiButton><svg width="9" height="9"><path d="M1 7.500h6" stroke="#808080" strokeWidth="2" /></svg></MdiButton>
          <MdiButton><svg width="11" height="11"><path d="M1.500 4.500h6v5h-6zM4.500 2.500h5v4" stroke="#808080" fill="none" /></svg></MdiButton>
          <MdiButton><svg width="9" height="9"><path d="M1 1l7 7M8 1L1 8" stroke="#808080" strokeWidth="2" /></svg></MdiButton>
        </MdiButtons>
      </MenuBar>

      <ToolRow>
        <ToolGroup items={["file", "open", "save", "del", "wcsview"]} />
        <ToolGroup $pr={2} items={["crop", ["arrow", 22], "jpeg", ["cube", 32, true]]} />
        <ToolGroup $pl={8} $pr={2} items={["axes", "cubeC", ["arrow", 17], "noCube"]} />
        <ToolGroup $pl={8} $pr={1} items={["planes", "ptvec", "axes3g", "axes000"]} />
        <ToolGroup $pl={8} $pr={3} items={["addBody", "mirror", "chain"]} />
        <ToolGroup $pl={8} $pr={2} items={["ruler", "angle", "surfMeas"]} />
        <ToolGroup $pl={9} $pr={0} items={["bossA", "cylinders", "bossB", "bossC"]} />
        <ToolGroup $pl={9} $pr={0} items={["surfPts", "surfPatch", "surfRib", "surfMesh", "surfArrow", "surfLoop", "surfBlue", "extr2", "stack", "|", "trim1", "trim2"]} />
        <ToolGroup $pl={9} $pr={1} items={["redSurf", "wrenchSurf"]} />
        <ToolGroup $ml={8} $pl={7} $pr={0} $open items={["dLine", "dLine2", "dCurve", "dArcPt", "dCirc", "dCirc2", "dPlus"]} />
      </ToolRow>
      <ToolRow $last>
        <ToolGroup $pr={3} items={["boxPlane", "pin", "tube", "boxCircle", "extrude", "revolve", "diamond", "cubeW"]} />
        <ToolGroup $pl={8} $pr={1} items={["frustum", "blend", "chamf1", "chamf2", "chamfBlock", "pocket", "holes", "book", "shell", "offset", "split", "split2", "uniteT", "subtT", "intersT"]} />
        <ToolGroup $pl={10} $pr={1} items={["circLine", "spline", "plus", "||", "profile", "curves1", "curves2", "curves3", "offPts", "prism", "wire", "swoopArr", "radial", "triangle"]} />
        <ToolGroup $pl={9} $pr={1} items={["wrenchDoc", "trimX", "cross", "corner", "fillet", "stretch"]} />
        <ToolGroup $pl={4} $pr={2} items={[["xdim", 38], ["pyramid", 30]]} />
        <ToolGroup $pl={8} $pr={2} items={["surfCy", "loopDots"]} />
      </ToolRow>

      <Workspace>
        <Canvas>
          <ModelView width="1556" height="728" viewBox="0 112 1556 728">
            <path d="M537 288h368v416H537z" fill="#000" />
            <path d="M537 288L904 704M608 288L868 437" stroke="#e8e8e8" fill="none" />
            <path d="M905 391l30-5-9 197-21-11" stroke="#10e010" fill="none" />
            <path d={star(935, 386) + star(926, 583)} stroke="#c83020" fill="none" />
            <path d="M900 703h8M904 700v8" stroke="#c83020" fill="none" />
          </ModelView>
          <CornerLabel>TOP WORK</CornerLabel>

          <Dialog>
            <DialogTitle>
              <AppLogo size={15} />
              基本曲线
              <DialogClose>
                <svg width="11" height="9"><path d="M1 1l9 7M10 1L1 8" stroke="#667" strokeWidth="1.800" /></svg>
              </DialogClose>
            </DialogTitle>
            <Client>
              <IconStrip>
                <StripBtn $on><Icon name="dlgLine" /></StripBtn>
                <StripBtn><Icon name="dlgArc" /></StripBtn>
                <StripBtn><Icon name="dlgCirc" /></StripBtn>
                <StripBtn><Icon name="fillet" /></StripBtn>
                <StripBtn><Icon name="trimX" /></StripBtn>
                <StripBtn><Icon name="wrenchDoc" /></StripBtn>
              </IconStrip>
              <Separator $m="4px 0 0 0" />
              <DlgRow $h={16} $mt={5}>
                <CheckBox $off />
                <DlgLabel $off $mr={8}>无限制</DlgLabel>
                <CheckBox />
                <DlgLabel>增量</DlgLabel>
              </DlgRow>
              <DlgRow $h={34} $mt={6}>
                <DlgLabel>点方式</DlgLabel>
                <PointButton>
                  <PointFace><Icon name="bolt" size={24} /></PointFace>
                  <PointDrop>
                    <svg width="9" height="6"><path d="M1 1l3.500 3.500L8 1" stroke="#555" fill="none" /></svg>
                  </PointDrop>
                </PointButton>
              </DlgRow>
              <DlgRow $h={27} $mt={4}>
                <CheckBox $up>
                  <svg width="11" height="11"><path d="M1.500 5.500l3 3 5-6" stroke="#333" fill="none" strokeWidth="1.300" /></svg>
                </CheckBox>
                <DlgLabel $up>线串模式</DlgLabel>
                <Btn $w={171} $h={27} $ml={9} $focus>打断线串</Btn>
              </DlgRow>
              <Pane>
                <Btn $w={234} $h={27} $off>锁定模式</Btn>
                <DlgRow $h={17} $mt={3}>平行于</DlgRow>
                <AxisRow>
                  <Btn $w={74} $h={27}>XC</Btn>
                  <Btn $w={74} $h={27}>YC</Btn>
                  <Btn $w={74} $h={27}>ZC</Btn>
                </AxisRow>
                <Fieldset>
                  <Legend>平行距离于</Legend>
                  <Radio />
                  <DlgLabel $mr={14}>原先的</DlgLabel>
                  <Radio $on />
                  <DlgLabel>新的</DlgLabel>
                </Fieldset>
                <AngleRow $h={23} $mt={7}>
                  角度增量
                  <AngleInput>0. 0000</AngleInput>
                </AngleRow>
              </Pane>
              <Separator $m="6px -4px 0 -4px" />
              <DialogFoot>
                <Btn $w={52} $h={25} $off>确定</Btn>
                <Btn $w={52} $h={25} $off>应用</Btn>
                <Btn $w={52} $h={25}>取消</Btn>
              </DialogFoot>
            </Client>
          </Dialog>

          <DataBar>
            <DataTop>
              <DataClose>x</DataClose>
            </DataTop>
            <DataRow>
              <AxisLabel>XC</AxisLabel>
              <DataInput $caret $mr={7}>-114.031</DataInput>
              <AxisLabel>YC</AxisLabel>
              <DataInput $mr={7}>82.06196</DataInput>
              <AxisLabel>ZC</AxisLabel>
              <DataInput>0.00000</DataInput>
              <DataIcon $w={24}><Icon name="rect" size={22} /></DataIcon>
              <DataInput>260.8702</DataInput>
              <DataIcon><Icon name="arcAngle" size={22} /></DataIcon>
              <DataInput>132.4561</DataInput>
              <DataIcon><Icon name="scale" size={22} /></DataIcon>
              <DataInput>1.000</DataInput>
            </DataRow>
          </DataBar>

          <CpuWidget>
            <CpuDial>
              <CpuRing>27<small>%</small></CpuRing>
            </CpuDial>
            <CpuPill>
              <CpuTemp>
                54℃
                <svg width="10" height="14" viewBox="0 0 10 14"><path d="M5 0c3 3 5 5 5 8s-2 5-5 6c-3-1-5-3-5-6s2-5 5-8z" fill="#3cc83c" /></svg>
              </CpuTemp>
              CPU温度
            </CpuPill>
          </CpuWidget>
        </Canvas>
        <SideStrip />
        <SidePanel>
          <SideTabs>
            <SideTab><Icon name="tree1" size={24} /></SideTab>
            <SideTab><Icon name="tree2" size={24} /></SideTab>
          </SideTabs>
          <SideTabs>
            <SideTab><Icon name="globeDoc" size={24} /></SideTab>
            <SideTab><Icon name="gradCap" size={24} /></SideTab>
            <SideTab><Icon name="help" size={24} /></SideTab>
          </SideTabs>
          <SideTabs>
            <SideTab><Icon name="clock" size={24} /></SideTab>
            <SideTab><Icon name="doorList" size={24} /></SideTab>
          </SideTabs>
        </SidePanel>
      </Workspace>

      <StatusBar>
        <StatusLeft>指出直线的终点或选择对象</StatusLeft>
        屏幕位置
      </StatusBar>

      <Taskbar>
        <StartBtn>
          <svg width="17" height="17" viewBox="0 0 17 17"><path d="M0 2.500l7-1v6.500H0zM8 1.300l9-1.300v8H8zM0 9h7v6.500l-7-1zM8 9h9v8l-9-1.300z" fill="#fff" /></svg>
        </StartBtn>
        <EdgeBtn><Icon name="edge" size={24} /></EdgeBtn>
        <TaskBtn $w={153} $pad={7} $gap={4}>
          <VmIcon />
          VMware Worksta...
        </TaskBtn>
        <TaskBtn $w={160} $pad={12} $gap={6} $active>
          <AppLogo size={21} />
          Unigraphics NX 2...
        </TaskBtn>
        <Spacer />
        <TrayText>
          54℃<br />CPU温度
        </TrayText>
        {tray.map((t) => (
          <TrayIcon key={t}><Icon name={t} size={17} /></TrayIcon>
        ))}
        <Weather>
          <Icon name="cloud" size={28} />
          <WeatherText>明<br />25℃~34℃</WeatherText>
        </Weather>
        <NotifyBtn><Icon name="notify" size={20} /></NotifyBtn>
      </Taskbar>

      <Watermark>
        <svg width="74" height="78" viewBox="0 0 74 78">
          <path d="M37 0l37 19v40L37 78 0 59V19z" fill="#5aaedc" fillOpacity=".65" />
          <path d="M37 0l37 19v40L37 78c18-10 26-40 0-78z" fill="#1f86c0" fillOpacity=".75" />
          <path d="M37 26l20 11v20L37 68 17 57V37z" fill="#e8f4fb" fillOpacity=".25" stroke="#fff" strokeOpacity=".7" strokeWidth="4" />
          <path d="M17 37l20 11 20-11M37 48v20" stroke="#fff" strokeOpacity=".7" strokeWidth="3" fill="none" />
        </svg>
        <WmText>
          <WmBig>3D世界网</WmBig>
          <WmSmall>WWW.3DSJW.COM</WmSmall>
        </WmText>
      </Watermark>
    </Screen>
  );
}
